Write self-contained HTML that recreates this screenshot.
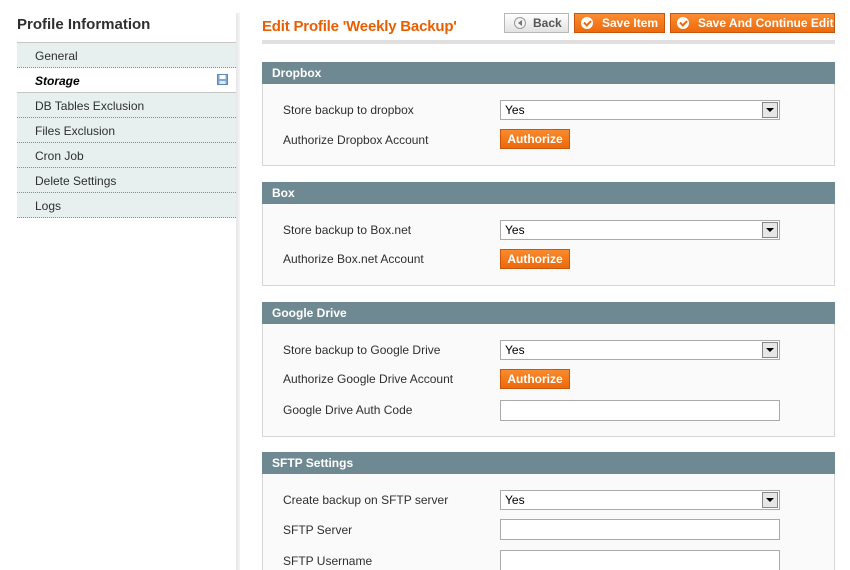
<!DOCTYPE html>
<html style="height:570px;overflow:hidden"><head><style>
*{margin:0;padding:0;box-sizing:border-box}
body{width:850px;height:570px;background:#fff;font-family:"Liberation Sans",Arial,sans-serif;font-size:12px;color:#2f2f2f;position:relative;overflow:hidden}
.a{position:absolute}
.nav{left:17px;width:219px;height:25px;background:#e7efef;border-bottom:1px dotted #8a8a8a;padding-left:18px;line-height:27px;font-size:12px;color:#2f2f2f}
.hd{left:262px;width:573px;height:22px;background:#6f8992;color:#fff;font-weight:bold;padding-left:10px;line-height:22px}
.bd{left:262px;width:573px;background:#fafafa;border:1px solid #d6d6d6;border-top:0}
.lb{left:283px;font-size:12px;color:#2f2f2f}
.sel{left:500px;width:280px;height:20px;border:1px solid #aaa;background:#fff;padding-left:4px;line-height:18px;color:#000}
.sel:after{content:"";position:absolute;right:1px;top:1px;width:16px;height:16px;background:#e6e6e6;border:1px solid #888;box-sizing:border-box}
.sel i{position:absolute;right:5px;top:7px;width:0;height:0;border-left:4px solid transparent;border-right:4px solid transparent;border-top:4px solid #000;z-index:2}
.inp{left:500px;width:280px;height:21px;border:1px solid #aaa;background:#fff}
.au{left:500px;width:70px;height:20px;background:linear-gradient(#fa8a2e,#ec6a0c);border:1px solid #c9560a;color:#fff;font-weight:bold;text-align:center;line-height:19px}
.ob{height:20px;background:linear-gradient(#fb8d33,#ec6a0c);border:1px solid #c9560a;color:#fff;font-weight:bold;line-height:19px;top:13px}
.ck{position:absolute;left:6px;top:3px;width:12px;height:12px;border-radius:50%;background:#fff}
.ck:after{content:"";position:absolute;left:3px;top:3px;width:5px;height:3px;border-left:2px solid #ec6a0c;border-bottom:2px solid #ec6a0c;transform:rotate(-45deg)}
</style></head><body>
<div class="a" style="left:236px;top:13px;width:4px;height:557px;background:linear-gradient(90deg,#e6e6e6,#f5f5f5)"></div>
<div class="a" style="left:17px;top:16px;font-size:15px;font-weight:bold;color:#2f2f2f">Profile Information</div>
<div class="a" style="left:17px;top:42px;width:219px;height:1px;background:#c6c6c6"></div>
<div class="a nav" style="top:43px">General</div>
<div class="a nav" style="top:68px;background:#fff;border-bottom:1px solid #c6c6c6;font-weight:bold;font-style:italic;color:#000">Storage
<svg style="position:absolute;left:200px;top:6px" width="11" height="11" viewBox="0 0 11 11"><rect x="0.5" y="0.5" width="10" height="10" fill="#7fa7d4" stroke="#5a88bd"/><rect x="2.5" y="1" width="6" height="4" fill="#fff"/><rect x="2.5" y="7" width="6" height="3" fill="#dde8f3"/></svg></div>
<div class="a nav" style="top:93px">DB Tables Exclusion</div>
<div class="a nav" style="top:118px">Files Exclusion</div>
<div class="a nav" style="top:143px">Cron Job</div>
<div class="a nav" style="top:168px">Delete Settings</div>
<div class="a nav" style="top:193px">Logs</div>

<div class="a" style="left:262px;top:18px;font-size:15px;font-weight:bold;color:#eb5e00;letter-spacing:-0.2px">Edit Profile 'Weekly Backup'</div>
<div class="a" style="left:262px;top:40px;width:573px;height:4px;background:#dfdfdf"></div>
<div class="a" style="left:504px;top:13px;width:65px;height:20px;background:linear-gradient(#fff,#e2e2e2);border:1px solid #b6b6b6;color:#555;font-weight:bold;line-height:19px;padding-left:28px">Back
<span style="position:absolute;left:9px;top:3px;width:12px;height:12px;border-radius:50%;border:1px solid #999;background:#f4f4f4"></span><span style="position:absolute;left:13px;top:6px;border-right:4px solid #777;border-top:3px solid transparent;border-bottom:3px solid transparent"></span></div>
<div class="a ob" style="left:574px;width:91px;padding-left:27px"><span class="ck"></span>Save Item</div>
<div class="a ob" style="left:670px;width:165px;padding-left:27px"><span class="ck"></span>Save And Continue Edit</div>

<div class="a hd" style="top:62px">Dropbox</div>
<div class="a bd" style="top:84px;height:82px"></div>
<div class="a lb" style="top:103px">Store backup to dropbox</div>
<div class="a sel" style="top:100px">Yes<i></i></div>
<div class="a lb" style="top:133px">Authorize Dropbox Account</div>
<div class="a au" style="top:129px">Authorize</div>

<div class="a hd" style="top:182px">Box</div>
<div class="a bd" style="top:204px;height:82px"></div>
<div class="a lb" style="top:223px">Store backup to Box.net</div>
<div class="a sel" style="top:220px">Yes<i></i></div>
<div class="a lb" style="top:252px">Authorize Box.net Account</div>
<div class="a au" style="top:249px">Authorize</div>

<div class="a hd" style="top:302px">Google Drive</div>
<div class="a bd" style="top:324px;height:113px"></div>
<div class="a lb" style="top:343px">Store backup to Google Drive</div>
<div class="a sel" style="top:340px">Yes<i></i></div>
<div class="a lb" style="top:372px">Authorize Google Drive Account</div>
<div class="a au" style="top:369px">Authorize</div>
<div class="a lb" style="top:403px">Google Drive Auth Code</div>
<div class="a inp" style="top:400px"></div>

<div class="a hd" style="top:452px">SFTP Settings</div>
<div class="a bd" style="top:474px;height:96px;border-bottom:0"></div>
<div class="a lb" style="top:493px">Create backup on SFTP server</div>
<div class="a sel" style="top:490px">Yes<i></i></div>
<div class="a lb" style="top:523px">SFTP Server</div>
<div class="a inp" style="top:519px"></div>
<div class="a lb" style="top:554px">SFTP Username</div>
<div class="a inp" style="top:550px;height:20px;border-bottom:0"></div>
</body></html>
